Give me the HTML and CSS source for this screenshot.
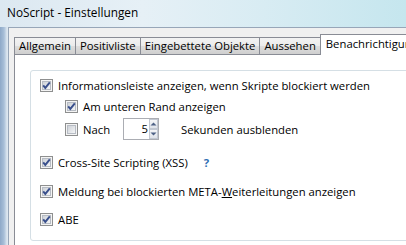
FILE: index.html
```html
<!DOCTYPE html>
<html lang="de">
<head>
<meta charset="utf-8">
<title>NoScript - Einstellungen</title>
<link rel="stylesheet" href="styles.css">
</head>
<body>
<div class="window">
  <div class="titlebar">NoScript - Einstellungen</div>
  <div class="frame">
    <div class="client">
      <div class="tabs">
        <div class="tab">Allgemein</div>
        <div class="tab">Positivliste</div>
        <div class="tab">Eingebettete Objekte</div>
        <div class="tab">Aussehen</div>
        <div class="tab selected">Benachrichtigungen</div>
      </div>
      <div class="panel">
        <div class="group">
          <div class="row r1">
            <svg class="cb" width="13" height="13" viewBox="0 0 13 13"><defs><linearGradient id="g1" x1="0" y1="0" x2="1" y2="1"><stop offset="0" stop-color="#cbcfd5"/><stop offset="1" stop-color="#f7f8f9"/></linearGradient></defs><rect x="0.5" y="0.5" width="12" height="12" fill="#f4f4f4" stroke="#8e8f8f"/><rect x="2.5" y="2.5" width="8" height="8" fill="url(#g1)" stroke="#b7bcc4"/><path d="M3.2 6.3 L5.3 8.9 L9.8 3.3" fill="none" stroke="#394f8c" stroke-width="1.9"/></svg>
            <span>Informationsleiste anzeigen, wenn Skripte blockiert werden</span>
          </div>
          <div class="row r2 indent">
            <svg class="cb" width="13" height="13" viewBox="0 0 13 13"><rect x="0.5" y="0.5" width="12" height="12" fill="#f4f4f4" stroke="#8e8f8f"/><rect x="2.5" y="2.5" width="8" height="8" fill="url(#g1)" stroke="#b7bcc4"/><path d="M3.2 6.3 L5.3 8.9 L9.8 3.3" fill="none" stroke="#394f8c" stroke-width="1.9"/></svg>
            <span>Am unteren Rand anzeigen</span>
          </div>
          <div class="row r3 indent">
            <svg class="cb" width="13" height="13" viewBox="0 0 13 13"><rect x="0.5" y="0.5" width="12" height="12" fill="#f4f4f4" stroke="#8e8f8f"/><rect x="2.5" y="2.5" width="8" height="8" fill="url(#g1)" stroke="#b7bcc4"/></svg>
            <span class="nach">Nach</span>
            <div class="spin">
              <span class="val">5</span>
              <div class="spinbtns">
                <div class="sb"><svg width="7" height="4" viewBox="0 0 7 4"><path d="M0.5 3.5 L3.5 0.5 L6.5 3.5 Z" fill="#4d6185"/></svg></div>
                <div class="sb"><svg width="7" height="4" viewBox="0 0 7 4"><path d="M0.5 0.5 L3.5 3.5 L6.5 0.5 Z" fill="#4d6185"/></svg></div>
              </div>
            </div>
            <span class="sek">Sekunden ausblenden</span>
          </div>
          <div class="row r4">
            <svg class="cb" width="13" height="13" viewBox="0 0 13 13"><rect x="0.5" y="0.5" width="12" height="12" fill="#f4f4f4" stroke="#8e8f8f"/><rect x="2.5" y="2.5" width="8" height="8" fill="url(#g1)" stroke="#b7bcc4"/><path d="M3.2 6.3 L5.3 8.9 L9.8 3.3" fill="none" stroke="#394f8c" stroke-width="1.9"/></svg>
            <span>Cross-Site Scripting (XSS)</span>
            <span class="help">?</span>
          </div>
          <div class="row r5">
            <svg class="cb" width="13" height="13" viewBox="0 0 13 13"><rect x="0.5" y="0.5" width="12" height="12" fill="#f4f4f4" stroke="#8e8f8f"/><rect x="2.5" y="2.5" width="8" height="8" fill="url(#g1)" stroke="#b7bcc4"/><path d="M3.2 6.3 L5.3 8.9 L9.8 3.3" fill="none" stroke="#394f8c" stroke-width="1.9"/></svg>
            <span>Meldung bei blockierten META-<u>W</u>eiterleitungen anzeigen</span>
          </div>
          <div class="row r6">
            <svg class="cb" width="13" height="13" viewBox="0 0 13 13"><rect x="0.5" y="0.5" width="12" height="12" fill="#f4f4f4" stroke="#8e8f8f"/><rect x="2.5" y="2.5" width="8" height="8" fill="url(#g1)" stroke="#b7bcc4"/><path d="M3.2 6.3 L5.3 8.9 L9.8 3.3" fill="none" stroke="#394f8c" stroke-width="1.9"/></svg>
            <span>ABE</span>
          </div>
        </div>
      </div>
    </div>
  </div>
</div>
</body>
</html>
```

FILE: styles.css
```css
html, body {
  margin: 0;
  padding: 0;
}
body {
  width: 406px;
  height: 245px;
  overflow: hidden;
  font-family: "Open Sans", "Noto Sans", sans-serif;
  font-size: 11.3px;
  color: #000;
}
.window {
  width: 406px;
  height: 245px;
  display: flex;
  flex-direction: column;
  background: linear-gradient(180deg, #8aa6c6 0%, #a7bfd9 30%, #7f9fc4 55%, #b4c9de 80%, #89a5c8 100%);
}
.titlebar {
  height: 27px;
  line-height: 25px;
  padding-left: 7px;
  font-size: 11.8px;
  background: linear-gradient(90deg, #dce8f1 0%, #e6f0f6 35%, #d8ecf3 65%, #c5e6ee 100%);
  white-space: nowrap;
}
.frame {
  flex: 1;
  display: flex;
  padding-left: 8px;
  background: linear-gradient(90deg, #8ea9c8 0px, #a8bfd8 4px, #dde7f0 7px, #dde7f0 8px);
  min-height: 0;
}
.client {
  flex: 1;
  background: #f0f0f0;
  border-left: 1px solid #97a6b8;
  border-top: 1px solid #97a6b8;
  padding: 6px 0 0 5px;
  min-width: 0;
  display: flex;
  flex-direction: column;
}
.tabs {
  display: flex;
  align-items: flex-end;
  white-space: nowrap;
  position: relative;
  z-index: 1;
}
.tab {
  height: 16px;
  line-height: 16px;
  padding: 0 4px;
  border: 1px solid #898c95;
  border-bottom: none;
  background: linear-gradient(180deg, #f3f3f3 0%, #ebebeb 50%, #dddddd 51%, #cfcfcf 100%);
  margin-right: -1px;
}
.tab.selected {
  height: 20px;
  line-height: 18px;
  padding: 0 5px;
  background: #fff;
  margin-bottom: -1px;
  position: relative;
}
.panel {
  flex: 1;
  background: #fff;
  border-top: 1px solid #898c95;
  border-left: 1px solid #898c95;
  padding: 15px 0 0 15px;
}
.group {
  width: 400px;
  height: 165px;
  border: 1px solid #d5dfe5;
  border-radius: 3px;
  padding: 4px 0 0 9px;
  box-sizing: content-box;
}
.row {
  display: flex;
  align-items: center;
  height: 20px;
  white-space: nowrap;
}
.cb {
  flex: none;
  margin-right: 5px;
}
.indent {
  margin-left: 25px;
}
.r2 { margin-top: 1px; }
.r3 { margin-top: 2px; height: 22px; }
.r4 { margin-top: 12px; }
.r5 { margin-top: 9px; }
.r6 { margin-top: 8px; }
.nach {
  width: 40px;
}
.spin {
  display: flex;
  align-items: stretch;
  width: 34px;
  height: 20px;
  border: 1px solid #abadb3;
  background: #fff;
}
.val {
  flex: 1;
  text-align: right;
  line-height: 20px;
  padding-right: 1px;
}
.spinbtns {
  width: 9px;
  display: flex;
  flex-direction: column;
}
.sb {
  flex: 1;
  display: flex;
  align-items: center;
  justify-content: center;
  border: 1px solid #c2c8d2;
  background: linear-gradient(180deg, #f5f6f8, #dfe3ea);
}
.sek {
  margin-left: 22px;
}
.help {
  margin-left: 16px;
  color: #2f6fb4;
  font-weight: bold;
}
u {
  text-decoration: underline;
}
```
